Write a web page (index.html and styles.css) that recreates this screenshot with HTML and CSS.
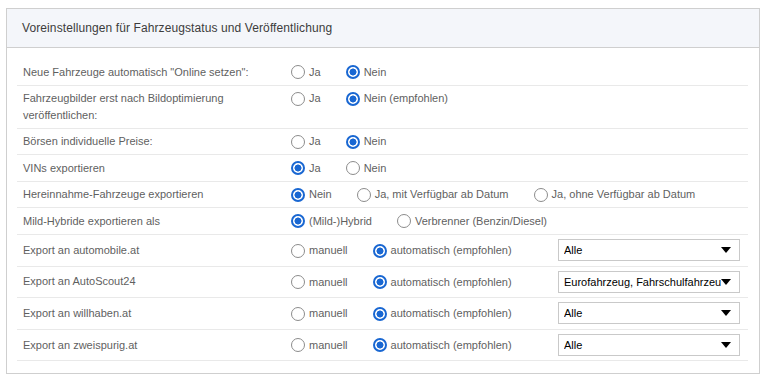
FILE: index.html
```html
<!DOCTYPE html>
<html lang="de">
<head>
    <meta charset="UTF-8">
    <meta name="viewport" content="width=device-width, initial-scale=1.0">
    <title>Voreinstellungen</title>
    <link rel="stylesheet" href="styles.css">
</head>
<body>
    <section class="panel">
        <div class="panel-heading">Voreinstellungen für Fahrzeugstatus und Veröffentlichung</div>
        <div class="panel-body">
            <table class="settings">
                <tr>
                    <td class="label">Neue Fahrzeuge automatisch "Online setzen":</td>
                    <td colspan="2">
                        <div class="choices">
                            <label><input type="radio" name="online"> Ja</label>
                            <label><input type="radio" name="online" checked> Nein</label>
                        </div>
                    </td>
                </tr>
                <tr>
                    <td class="label">Fahrzeugbilder erst nach Bildoptimierung veröffentlichen:</td>
                    <td colspan="2">
                        <div class="choices">
                            <label><input type="radio" name="bilder"> Ja</label>
                            <label><input type="radio" name="bilder" checked> Nein (empfohlen)</label>
                        </div>
                    </td>
                </tr>
                <tr>
                    <td class="label">Börsen individuelle Preise:</td>
                    <td colspan="2">
                        <div class="choices">
                            <label><input type="radio" name="preise"> Ja</label>
                            <label><input type="radio" name="preise" checked> Nein</label>
                        </div>
                    </td>
                </tr>
                <tr>
                    <td class="label">VINs exportieren</td>
                    <td colspan="2">
                        <div class="choices">
                            <label><input type="radio" name="vins" checked> Ja</label>
                            <label><input type="radio" name="vins"> Nein</label>
                        </div>
                    </td>
                </tr>
                <tr>
                    <td class="label">Hereinnahme-Fahrzeuge exportieren</td>
                    <td colspan="2">
                        <div class="choices">
                            <label><input type="radio" name="hereinnahme" checked> Nein</label>
                            <label><input type="radio" name="hereinnahme"> Ja, mit Verfügbar ab Datum</label>
                            <label><input type="radio" name="hereinnahme"> Ja, ohne Verfügbar ab Datum</label>
                        </div>
                    </td>
                </tr>
                <tr>
                    <td class="label">Mild-Hybride exportieren als</td>
                    <td colspan="2">
                        <div class="choices">
                            <label><input type="radio" name="hybrid" checked> (Mild-)Hybrid</label>
                            <label><input type="radio" name="hybrid"> Verbrenner (Benzin/Diesel)</label>
                        </div>
                    </td>
                </tr>
                <tr class="export-row">
                    <td class="label">Export an automobile.at</td>
                    <td>
                        <div class="choices">
                            <label><input type="radio" name="automobile"> manuell</label>
                            <label><input type="radio" name="automobile" checked> automatisch (empfohlen)</label>
                        </div>
                    </td>
                    <td class="select-cell">
                        <div class="select-wrap">
                            <select><option>Alle</option></select>
                        </div>
                    </td>
                </tr>
                <tr class="export-row">
                    <td class="label">Export an AutoScout24</td>
                    <td>
                        <div class="choices">
                            <label><input type="radio" name="autoscout"> manuell</label>
                            <label><input type="radio" name="autoscout" checked> automatisch (empfohlen)</label>
                        </div>
                    </td>
                    <td class="select-cell">
                        <div class="select-wrap">
                            <select><option>Eurofahrzeug, Fahrschulfahrzeug</option></select>
                        </div>
                    </td>
                </tr>
                <tr class="export-row">
                    <td class="label">Export an willhaben.at</td>
                    <td>
                        <div class="choices">
                            <label><input type="radio" name="willhaben"> manuell</label>
                            <label><input type="radio" name="willhaben" checked> automatisch (empfohlen)</label>
                        </div>
                    </td>
                    <td class="select-cell">
                        <div class="select-wrap">
                            <select><option>Alle</option></select>
                        </div>
                    </td>
                </tr>
                <tr class="export-row">
                    <td class="label">Export an zweispurig.at</td>
                    <td>
                        <div class="choices">
                            <label><input type="radio" name="zweispurig"> manuell</label>
                            <label><input type="radio" name="zweispurig" checked> automatisch (empfohlen)</label>
                        </div>
                    </td>
                    <td class="select-cell">
                        <div class="select-wrap">
                            <select><option>Alle</option></select>
                        </div>
                    </td>
                </tr>
            </table>
        </div>
    </section>
</body>
</html>
```

FILE: styles.css
```css
* {
    box-sizing: border-box;
    padding: 0;
    margin: 0;
}
body {
    font-family: 'Liberation Sans', Arial, sans-serif;
    font-size: 11px;
    color: #5f5f5f;
    background: #fff;
    padding: 8px 19px 0 6px;
}
.panel {
    border: 1px solid #cfcfcf;
    background: #fff;
}
.panel-heading {
    background: #f4f6fa;
    border-bottom: 1px solid #cfcfcf;
    height: 39px;
    padding: 12px 15px 0 15px;
    font-size: 12px;
    letter-spacing: 0.1px;
    color: #3c3c3c;
}
.panel-body {
    padding: 11px 11px 12px 10px;
}
.settings {
    width: 100%;
    border-collapse: collapse;
}
.settings td {
    border-bottom: 1px solid #e9e9e9;
    padding: 4px 6px;
    line-height: 17px;
    vertical-align: top;
}
.settings td.label {
    width: 268px;
    padding-top: 4.5px;
    padding-bottom: 3.5px;
}
.export-row td {
    vertical-align: middle;
    padding-top: 4.3px;
    padding-bottom: 4.3px;
}
.export-row td.label {
    padding-top: 4px;
    padding-bottom: 4px;
}
.choices {
    display: flex;
    gap: 25px;
    height: 17.6px;
    padding-top: 0.5px;
}
.choices label {
    display: flex;
    align-items: center;
    gap: 4px;
    white-space: nowrap;
}
.choices input {
    appearance: none;
    width: 14px;
    height: 14px;
    border: 1.5px solid #8c8c8c;
    border-radius: 50%;
    background: #fff;
}
.choices input:checked {
    border: 2px solid #1967d2;
    background: radial-gradient(circle, #1967d2 0 3.2px, #fff 3.8px);
}
.select-cell {
    width: 196px;
}
.select-wrap {
    position: relative;
    width: 182px;
}
.select-wrap select {
    appearance: none;
    display: block;
    width: 100%;
    height: 22px;
    border: 1px solid #c9c9c9;
    background: #fff;
    color: #000;
    font-family: 'Liberation Sans', Arial, sans-serif;
    font-size: 11px;
    padding: 0 18px 0 5px;
    outline: none;
}
.select-wrap::after {
    content: "";
    position: absolute;
    right: 9px;
    top: 8px;
    border-left: 5px solid transparent;
    border-right: 5px solid transparent;
    border-top: 6px solid #000;
}
```
